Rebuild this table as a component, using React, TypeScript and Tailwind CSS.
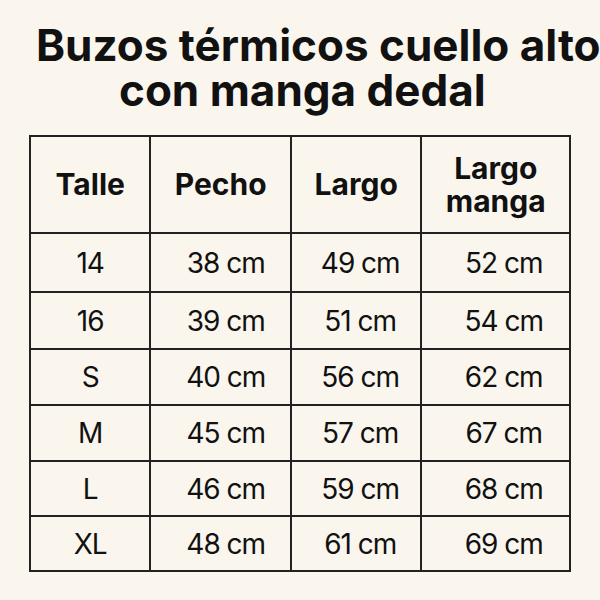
import React from 'react'

const rows: string[][] = [
  ['14', '38 cm', '49 cm', '52 cm'],
  ['16', '39 cm', '51 cm', '54 cm'],
  ['S', '40 cm', '56 cm', '62 cm'],
  ['M', '45 cm', '57 cm', '67 cm'],
  ['L', '46 cm', '59 cm', '68 cm'],
  ['XL', '48 cm', '61 cm', '69 cm'],
]

const rowHeights = ['h-[59px]', 'h-[57px]', 'h-[56px]', 'h-[56px]', 'h-[55px]', 'h-[55px]']
// values sit a little right of centre in the reference
const cellPad = ['pl-0', 'pl-[10px]', 'pl-[8px]', 'pl-[16px]']

export default function App(): JSX.Element {
  return (
    <div
      className="w-[600px] h-[600px] overflow-hidden bg-[#faf6ed] text-[#111]"
      style={{ fontFamily: 'Inter, "Noto Sans", sans-serif' }}
    >
      {/* Title */}
      <div className="pt-[23px] pl-[36px] text-[44px] font-bold leading-[45px] whitespace-nowrap">
        <div>Buzos térmicos cuello alto</div>
        <div className="pl-[83px]">con manga dedal</div>
      </div>

      {/* Size table */}
      <table className="mt-[22px] ml-[29px] w-[542px] border-collapse border-2 border-[#222]">
        <thead>
          <tr className="h-[97px]">
            <th className="w-[121px] border-2 border-[#222] text-[30px] font-bold">Talle</th>
            <th className="w-[141px] border-2 border-[#222] text-[30px] font-bold">Pecho</th>
            <th className="w-[131px] border-2 border-[#222] text-[30px] font-bold">Largo</th>
            <th className="w-[149px] border-2 border-[#222] text-[30px] font-bold leading-[33px]">
              Largo
              <br />
              manga
            </th>
          </tr>
        </thead>
        <tbody>
          {rows.map((r, i) => (
            <tr key={i} className={rowHeights[i]}>
              {r.map((c, j) => (
                <td
                  key={j}
                  className={`${cellPad[j]} border-2 border-[#222] text-center text-[28px] font-normal tracking-[-1px]`}
                >
                  {c}
                </td>
              ))}
            </tr>
          ))}
        </tbody>
      </table>
    </div>
  )
}
